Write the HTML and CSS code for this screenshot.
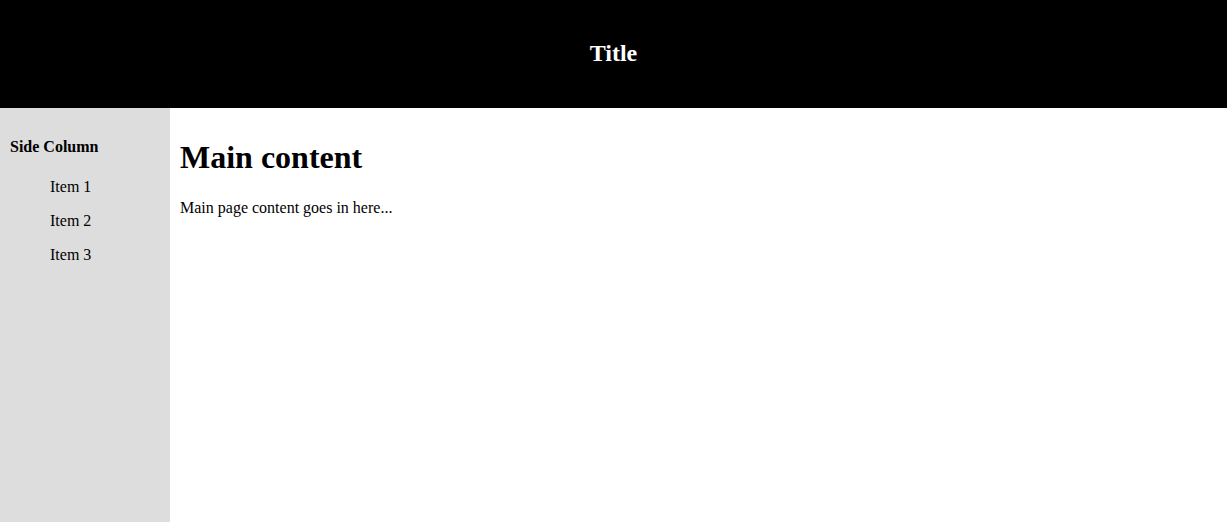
FILE: index.html
```html
<!DOCTYPE html>
<html>
<head>
<meta charset="utf-8">
<link rel="stylesheet" href="styles.css">
</head>
<body>
<header class="top">
  <h2 class="title">Title</h2>
</header>
<div class="layout">
  <aside class="side">
    <h4 class="side-title">Side Column</h4>
    <ul class="side-list">
      <li>Item 1</li>
      <li>Item 2</li>
      <li>Item 3</li>
    </ul>
  </aside>
  <main class="main">
    <h1 class="main-title">Main content</h1>
    <p class="main-text">Main page content goes in here...</p>
  </main>
</div>
</body>
</html>
```
FILE: styles.css
```css
html, body {
  margin: 0;
  height: 100%;
}
body {
  font-family: "Liberation Serif", "Times New Roman", serif;
  font-size: 16px;
  color: #000;
  display: flex;
  flex-direction: column;
}
.top {
  background: #000;
  color: #fff;
  height: 108px;
  display: flex;
  align-items: center;
  justify-content: center;
  flex: none;
}
.title {
  margin: 0 0 2px;
  font-size: 24px;
  font-weight: bold;
}
.layout {
  flex: 1;
  display: flex;
}
.side {
  width: 170px;
  background: #ddd;
  padding: 10px;
  box-sizing: border-box;
  flex: none;
}
.side-title {
  font-size: 16px;
  margin: 20px 0 14px;
}
.side-list {
  list-style: none;
  margin: 0;
  padding-left: 40px;
}
.side-list li {
  padding: 8px 0;
}
.main {
  flex: 1;
  padding: 10px;
}
.main-title {
  font-size: 32px;
  margin: 21.44px 0 22.5px;
}
.main-text {
  margin: 0;
}
```
